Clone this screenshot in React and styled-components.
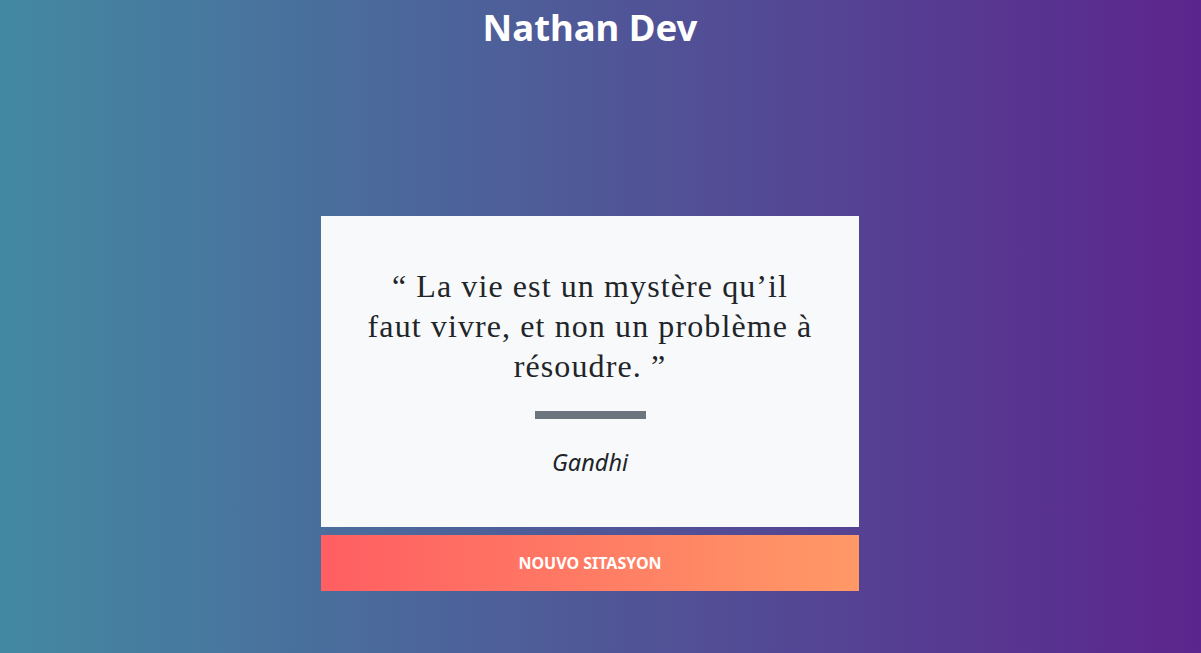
import React from "react";
import styled, { createGlobalStyle } from "styled-components";

const Global = createGlobalStyle`
  html, body { margin: 0; padding: 0; height: 100%; }
  body {
    font-family: "Noto Sans", "Open Sans", sans-serif;
    background: linear-gradient(to right, #4389a2, #5c258d);
    min-height: 653px;
  }
  #root { min-height: 653px; }
`;

const Page = styled.div`
  display: flex;
  flex-direction: column;
  align-items: center;
  min-height: 653px;
  padding-right: 21px;
`;

const Title = styled.h1`
  margin: 0;
  padding-top: 2px;
  color: #fff;
  font-family: "Noto Sans", sans-serif;
  font-weight: 700;
  font-size: 36.5px;
  line-height: 50px;
`;

const Box = styled.div`
  margin-top: 164px;
  width: 538px;
  display: flex;
  flex-direction: column;
  gap: 8px;
`;

const Card = styled.div`
  background: #f8f9fa;
  padding: 50px 0 48px;
  display: flex;
  flex-direction: column;
  align-items: center;
`;

const Quote = styled.p`
  margin: 0;
  width: 448px;
  text-align: center;
  font-family: "Liberation Serif", "Times New Roman", serif;
  font-size: 32px;
  letter-spacing: 1.1px;
  line-height: 40px;
  color: #212529;
`;

const Bar = styled.div`
  width: 111px;
  height: 8px;
  background: #6c757d;
  margin: 25px 0 26px;
`;

const Author = styled.p`
  margin: 0;
  font-family: "Noto Sans", sans-serif;
  font-style: italic;
  font-size: 23.5px;
  line-height: 34px;
  color: #212529;
`;

const Button = styled.button`
  height: 56px;
  border: 0;
  width: 100%;
  background: linear-gradient(to right, #ff5e62, #ff9966);
  color: #fff;
  font-family: "Noto Sans", sans-serif;
  font-weight: 700;
  font-size: 16px;
  text-transform: uppercase;
  cursor: pointer;
`;

export default function App() {
  return (
    <>
      <Global />
      <Page>
        <Title>Nathan Dev</Title>
        <Box>
          <Card>
            <Quote>“ La vie est un mystère qu’il faut vivre, et non un problème à résoudre. ”</Quote>
            <Bar />
            <Author>Gandhi</Author>
          </Card>
          <Button>Nouvo sitasyon</Button>
        </Box>
      </Page>
    </>
  );
}
